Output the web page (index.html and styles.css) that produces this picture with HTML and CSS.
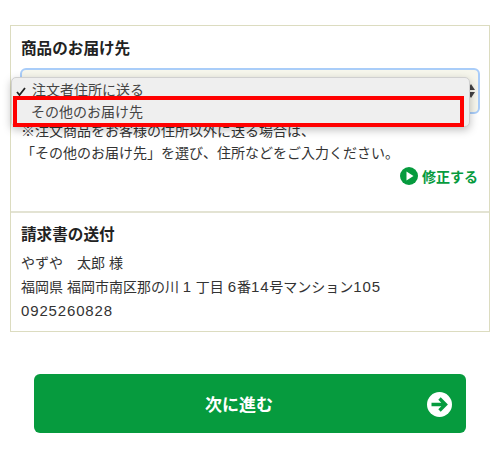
FILE: index.html
```html
<!doctype html>
<html lang="ja">
<head>
    <meta charset="utf-8">
    <title>商品のお届け先</title>
    <link rel="stylesheet" href="styles.css">
</head>
<body>
<div class="panel">
    <div class="sec sec1">
        <h2 class="ttl">商品のお届け先</h2>
        <div class="select">
            <svg class="updown" width="8" height="14" viewBox="0 0 8 14"><path d="M4 0 8 6H0zM4 14 0 8h8z" fill="#444"/></svg>
        </div>
        <p class="note">※注文商品をお客様の住所以外に送る場合は、<br>「その他のお届け先」を選び、住所などをご入力ください。</p>
        <div class="edit">
            <svg width="18" height="18" viewBox="0 0 18 18"><circle cx="9" cy="9" r="9" fill="#069b3e"/><path d="M6.500 4.500 13.500 9l-7 4.500z" fill="#fff"/></svg>
            <span>修正する</span>
        </div>
        <div class="menu">
            <div class="opt">
                <svg class="check" width="10" height="9" viewBox="0 0 10 9"><path d="M1 5l2.500 3L9 1" fill="none" stroke="#222" stroke-width="1.800"/></svg>
                注文者住所に送る
            </div>
            <div class="opt opt-on">その他のお届け先</div>
        </div>
    </div>
    <div class="sec sec2">
        <h2 class="ttl">請求書の送付</h2>
        <p class="addr">やずや　太郎 様<br>福岡県 福岡市南区那の川 <span class="num">1</span> 丁目 <span class="num">6</span>番<span class="num">14</span>号マンション<span class="num">105</span><br><span class="num">0925260828</span></p>
    </div>
</div>
<div class="btn">
    <span>次に進む</span>
    <svg class="btn-ico" width="25" height="25" viewBox="0 0 25 25"><circle cx="12.500" cy="12.500" r="12.500" fill="#fff"/><path d="M4.500 12.500h14M12.500 6.500l6 6-6 6" fill="none" stroke="#069b3e" stroke-width="3.400"/></svg>
</div>
</body>
</html>
```

FILE: styles.css
```css
*{
    margin:0;
    padding:0;
    box-sizing:border-box;
}
body{
    width:500px;
    height:454px;
    overflow:hidden;
    padding:25px 10px 0;
    background:#fff;
    color:#333;
    font-family:"Liberation Sans","Noto Sans CJK JP",sans-serif;
    font-size:14px;
}
.panel{
    height:307px;
    border:1px solid #dcdcc0;
}
.sec{
    padding:0 10px;
}
.sec1{
    position:relative;
    height:187px;
    border-bottom:2px solid #e3e3d3;
    padding-top:13px;
}
.ttl{
    font-size:15.6px;
    line-height:20px;
    font-weight:bold;
    color:#222;
}
.select{
    display:flex;
    justify-content:flex-end;
    align-items:center;
    height:46px;
    margin:9px -1px 0;
    padding-right:3px;
    border:2px solid #a9cdf9;
    border-radius:6px;
    background:#f6f6ec;
}
.note{
    margin-top:6px;
    line-height:22px;
}
.edit{
    display:flex;
    justify-content:flex-end;
    align-items:center;
    gap:4px;
    margin-top:2px;
    padding-right:1px;
    color:#069b3e;
    font-weight:bold;
}
.menu{
    position:absolute;
    left:0;
    top:51px;
    width:459px;
    height:50px;
    border-radius:5px;
    background:#efefef;
    border:1px solid #d0d0d0;
    box-shadow:0 3px 8px rgba(0,0,0,.25);
    color:#444;
}
.opt{
    position:relative;
    height:19px;
    line-height:25px;
    padding-left:20px;
}
.opt-on{
    position:absolute;
    left:1px;
    top:18px;
    width:451px;
    height:31px;
    line-height:24px;
    padding-left:14px;
    border:4px solid #f00;
}
.check{
    position:absolute;
    left:4px;
    top:9px;
}
.sec2{
    padding-top:12px;
}
.addr{
    margin-top:7px;
    line-height:23px;
}
.num{
    font-size:15px;
    letter-spacing:.85px;
}
.btn{
    position:relative;
    display:flex;
    justify-content:center;
    align-items:center;
    width:432px;
    height:59px;
    margin:42px 0 0 24px;
    padding-right:22px;
    border-radius:6px;
    background:#069b3e;
    color:#fff;
    font-size:17px;
    font-weight:bold;
}
.btn-ico{
    position:absolute;
    right:14px;
    top:18px;
}
```
